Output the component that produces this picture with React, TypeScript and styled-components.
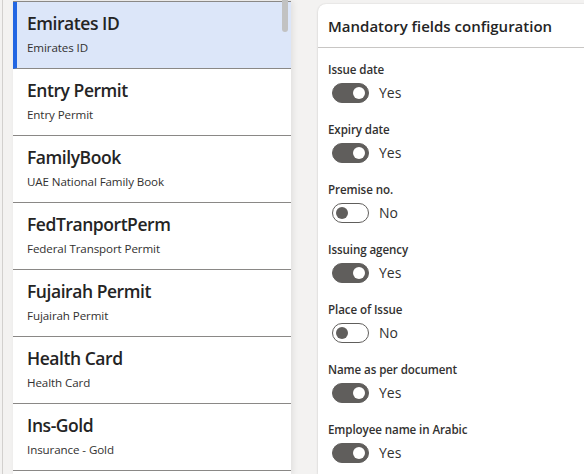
import React from 'react';
import styled, { createGlobalStyle } from 'styled-components';

const GlobalStyle = createGlobalStyle`
  html, body {
    margin: 0;
    padding: 0;
    background: #f3f2f1;
    font-family: 'Open Sans', 'Noto Sans', sans-serif;
    color: #323130;
  }
`;

const documents = [
  { code: 'Emirates ID', name: 'Emirates ID' },
  { code: 'Entry Permit', name: 'Entry Permit' },
  { code: 'FamilyBook', name: 'UAE National Family Book' },
  { code: 'FedTranportPerm', name: 'Federal Transport Permit' },
  { code: 'Fujairah Permit', name: 'Fujairah Permit' },
  { code: 'Health Card', name: 'Health Card' },
  { code: 'Ins-Gold', name: 'Insurance - Gold' },
];

const fields = [
  { label: 'Issue date', on: true },
  { label: 'Expiry date', on: true },
  { label: 'Premise no.', on: false },
  { label: 'Issuing agency', on: true },
  { label: 'Place of Issue', on: false },
  { label: 'Name as per document', on: true },
  { label: 'Employee name in Arabic', on: true },
];

export default function App() {
  return (
    <>
      <GlobalStyle />
      <Page>
        <Rail />
        <ListPane>
          <ScrollThumb />
          {documents.map((d, i) => (
            <Item key={d.code} selected={i === 0}>
              <ItemTitle>{d.code}</ItemTitle>
              <ItemSub>{d.name}</ItemSub>
            </Item>
          ))}
        </ListPane>
        <Card>
          <CardHeader>Mandatory fields configuration</CardHeader>
          <CardBody>
            {fields.map((f) => (
              <Field key={f.label}>
                <FieldLabel>{f.label}</FieldLabel>
                <ToggleRow>
                  <Track on={f.on}>
                    <Knob on={f.on} />
                  </Track>
                  <ToggleText>{f.on ? 'Yes' : 'No'}</ToggleText>
                </ToggleRow>
              </Field>
            ))}
          </CardBody>
        </Card>
      </Page>
    </>
  );
}

const Page = styled.div`
  display: flex;
  align-items: flex-start;
  height: 474px;
  overflow: hidden;
`;

const Rail = styled.div`
  width: 10px;
  height: 474px;
  margin-left: 2px;
  border-left: 1px solid #d2d0ce;
  flex-shrink: 0;
`;

const ListPane = styled.div`
  position: relative;
  width: 278px;
  height: 473px;
  margin-top: 1px;
  flex-shrink: 0;
  background: #fff;
  border-top: 1px solid #8a8886;
  box-shadow: 2px 0 6px rgba(0, 0, 0, 0.08);
`;

const ScrollThumb = styled.div`
  position: absolute;
  top: -5px;
  right: 3px;
  width: 6px;
  height: 35px;
  border-radius: 3px;
  background: #c2c2c2;
`;

const Item = styled.div<{ selected?: boolean }>`
  height: 66px;
  padding-left: ${(p) => (p.selected ? '10px' : '14px')};
  border-left: ${(p) => (p.selected ? '4px solid #2266e3' : 'none')};
  border-bottom: 1px solid #8a8886;
  background: ${(p) => (p.selected ? '#dce6f9' : '#fff')};
  display: flex;
  flex-direction: column;
`;

const ItemTitle = styled.div`
  margin-top: 9px;
  font-size: 17.5px;
  font-weight: 600;
  letter-spacing: -0.45px;
  line-height: 24px;
  color: #242424;
`;

const ItemSub = styled.div`
  margin-top: 5px;
  font-size: 11.6px;
  letter-spacing: -0.1px;
  line-height: 16px;
  color: #323130;
`;

const Card = styled.div`
  margin-left: 27px;
  margin-top: 4px;
  width: 300px;
  height: 470px;
  flex-shrink: 0;
  background: #fff;
  border-top-left-radius: 8px;
  box-shadow: 0 0 2px rgba(0, 0, 0, 0.12), 0 1px 3px rgba(0, 0, 0, 0.08);
`;

const CardHeader = styled.div`
  height: 43px;
  padding-left: 10px;
  display: flex;
  align-items: center;
  font-size: 15px;
  font-weight: 600;
  color: #242424;
  border-bottom: 1px solid #c8c6c4;
`;

const CardBody = styled.div`
  padding: 14px 0 0 10px;
  display: flex;
  flex-direction: column;
`;

const Field = styled.div`
  height: 60px;
  display: flex;
  flex-direction: column;
  gap: 5px;
`;

const FieldLabel = styled.div`
  font-size: 11.6px;
  font-weight: 600;
  letter-spacing: -0.1px;
  line-height: 16px;
  color: #323130;
`;

const ToggleRow = styled.div`
  display: flex;
  align-items: center;
  padding-left: 4px;
  gap: 10px;
`;

const Track = styled.div<{ on: boolean }>`
  box-sizing: border-box;
  width: 37px;
  height: 20px;
  border-radius: 10px;
  border: 1px solid #605e5c;
  background: ${(p) => (p.on ? '#605e5c' : '#fff')};
  display: flex;
  align-items: center;
  justify-content: ${(p) => (p.on ? 'flex-end' : 'flex-start')};
  padding: 0 3px;
`;

const Knob = styled.div<{ on: boolean }>`
  width: 12px;
  height: 12px;
  border-radius: 50%;
  background: ${(p) => (p.on ? '#fff' : '#605e5c')};
`;

const ToggleText = styled.span`
  font-size: 14px;
  line-height: 20px;
  color: #323130;
`;
